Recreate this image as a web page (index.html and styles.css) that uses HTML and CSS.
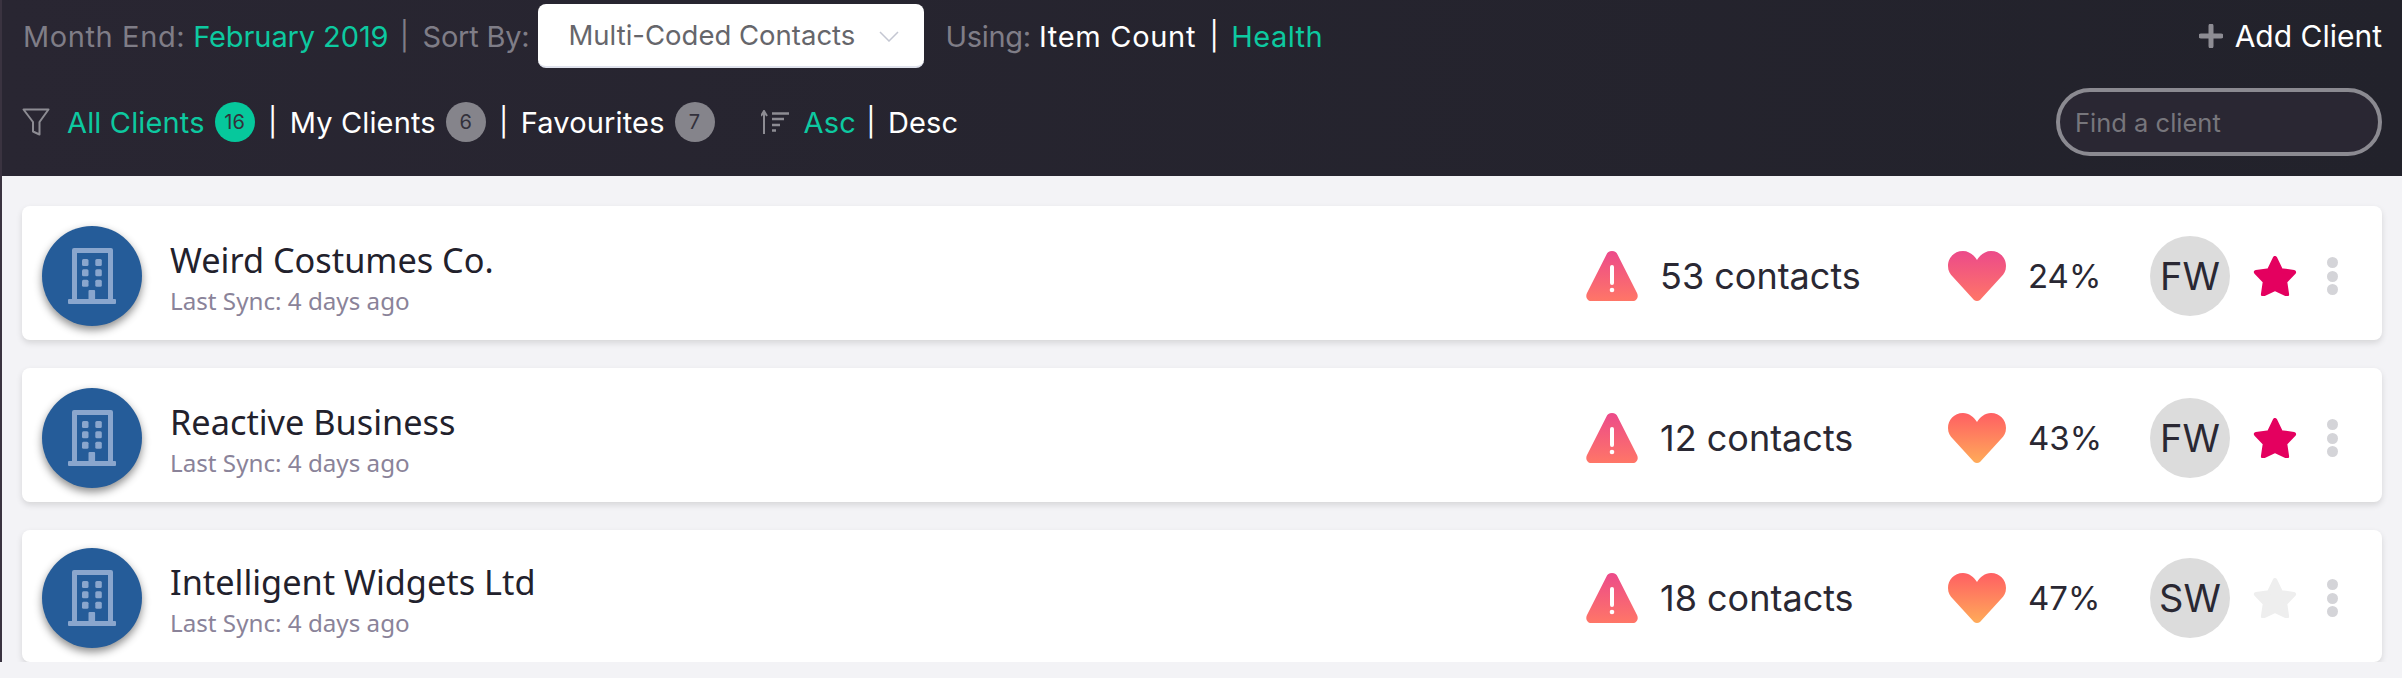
FILE: index.html
```html
<!DOCTYPE html>
<html lang="en">
<head>
    <meta charset="UTF-8">
    <title>Clients</title>
    <link rel="stylesheet" href="styles.css">
</head>
<body>
    <svg class="defs" width="0" height="0">
        <defs>
            <linearGradient id="redPink" x1="0" y1="0" x2="0" y2="1">
                <stop offset="0" stop-color="#ec4a8a"/>
                <stop offset="1" stop-color="#ff7667"/>
            </linearGradient>
            <linearGradient id="redOrange" x1="0" y1="0" x2="0" y2="1">
                <stop offset="0" stop-color="#ff5f63"/>
                <stop offset="1" stop-color="#ffab59"/>
            </linearGradient>
            <symbol id="building" viewBox="0 0 48 56">
                <path d="M4 2a2 2 0 0 1 2-2h37a2 2 0 0 1 2 2v49h-5V5H9v46H4z"/>
                <rect x="14" y="11" width="6.5" height="7" rx="1.5"/>
                <rect x="27.3" y="11" width="6.5" height="7" rx="1.5"/>
                <rect x="14" y="21.3" width="6.5" height="7" rx="1.5"/>
                <rect x="27.3" y="21.3" width="6.5" height="7" rx="1.5"/>
                <rect x="14" y="31.7" width="6.5" height="7" rx="1.5"/>
                <rect x="27.3" y="31.7" width="6.5" height="7" rx="1.5"/>
                <path d="M20.5 43a1 1 0 0 1 1-1h4.6a1 1 0 0 1 1 1v8h-6.6z"/>
                <rect x="0" y="51" width="48" height="5" rx="1"/>
            </symbol>
            <symbol id="warning" viewBox="0 0 52 50">
                <path fill="url(#redPink)" d="M26 0c3 0 4.600 1.500 5.500 3.500L51 42c2 4-.5 8-4 8H5c-3.500 0-6-4-4-8L20.500 3.500C21.400 1.500 23 0 26 0z"/>
                <rect x="24" y="14" width="4" height="20" rx="2" fill="#fff"/>
                <circle cx="26" cy="39" r="2.300" fill="#fff"/>
            </symbol>
            <path id="heartShape" d="M29 9C26 4 21 0 15 0 6 0 0 7 0 15c0 5 2 8 5 11l21 23q3 2 6 0l21-23c3-3 5-6 5-11 0-8-6-15-15-15-6 0-11 4-14 9z"/>
            <symbol id="star" viewBox="3 0 38 36">
                <polygon transform="translate(0 -1.500)" stroke-width="4" stroke-linejoin="round" points="22,3.500 27.300,14.500 39,16 31,24.500 32.700,36 22,31 11.300,36 13,24.500 5,16 16.700,14.500"/>
            </symbol>
        </defs>
    </svg>

    <header class="topbar">
        <div class="bar-row">
            <span class="dim month-label">Month End:</span>
            <span class="green month">February 2019</span>
            <span class="pipe pipe-dim">|</span>
            <span class="dim sort-label">Sort By:</span>
            <div class="sort-select">
                Multi-Coded Contacts
                <svg class="chevron" width="20" height="11" viewBox="0 0 20 11"><path d="M1 1l9 9 9-9" fill="none" stroke="#c4c7d2" stroke-width="1.500"/></svg>
            </div>
            <span class="dim using">Using:</span>
            <span class="white item-count">Item Count</span>
            <span class="pipe">|</span>
            <span class="green health-link">Health</span>
            <a class="add-client">
                <svg width="24" height="24" viewBox="0 0 24 24"><path d="M12 2v20M2 12h20" stroke="#8d8c93" stroke-width="5" stroke-linecap="round"/></svg>
                Add Client
            </a>
        </div>
        <div class="bar-row second">
            <svg class="filter-icon" width="28" height="28" viewBox="0 0 28 28"><path d="M1.500 1.500h25L17.500 14v12.500L11 23.500V14z" fill="none" stroke="#8d8c93" stroke-width="2" stroke-linejoin="round"/></svg>
            <span class="green">All Clients</span>
            <span class="badge active">16</span>
            <span class="pipe">|</span>
            <span class="white">My Clients</span>
            <span class="badge">6</span>
            <span class="pipe">|</span>
            <span class="white">Favourites</span>
            <span class="badge">7</span>
            <svg class="sort-icon" width="28" height="24" viewBox="0 0 28 24"><path d="M3 24V3M0 6l3-5 3 5" fill="none" stroke="#8d8c93" stroke-width="2"/><path d="M11 3.500h17M11 9h12M11 15h8M11 20.500h4" stroke="#8d8c93" stroke-width="2.500"/></svg>
            <span class="green">Asc</span>
            <span class="pipe near">|</span>
            <span class="white">Desc</span>
            <input class="search" type="text" placeholder="Find a client">
        </div>
    </header>

    <main class="client-list">
        <div class="card">
            <div class="logo"><svg width="48" height="56"><use href="#building"/></svg></div>
            <div class="info">
                <div class="name">Weird Costumes Co.</div>
                <div class="sync">Last Sync: 4 days ago</div>
            </div>
            <div class="contacts"><svg width="52" height="50"><use href="#warning"/></svg><span>53 contacts</span></div>
            <div class="health"><svg width="58" height="50" viewBox="0 0 58 50"><use href="#heartShape" fill="url(#redPink)"/></svg><span>24%</span></div>
            <div class="owner">FW</div>
            <svg class="fav on" width="44" height="40"><use href="#star"/></svg>
            <div class="dots"><i></i><i></i><i></i></div>
        </div>
        <div class="card">
            <div class="logo"><svg width="48" height="56"><use href="#building"/></svg></div>
            <div class="info">
                <div class="name">Reactive Business</div>
                <div class="sync">Last Sync: 4 days ago</div>
            </div>
            <div class="contacts"><svg width="52" height="50"><use href="#warning"/></svg><span>12 contacts</span></div>
            <div class="health"><svg width="58" height="50" viewBox="0 0 58 50"><use href="#heartShape" fill="url(#redOrange)"/></svg><span>43%</span></div>
            <div class="owner">FW</div>
            <svg class="fav on" width="44" height="40"><use href="#star"/></svg>
            <div class="dots"><i></i><i></i><i></i></div>
        </div>
        <div class="card short">
            <div class="logo"><svg width="48" height="56"><use href="#building"/></svg></div>
            <div class="info">
                <div class="name">Intelligent Widgets Ltd</div>
                <div class="sync">Last Sync: 4 days ago</div>
            </div>
            <div class="contacts"><svg width="52" height="50"><use href="#warning"/></svg><span>18 contacts</span></div>
            <div class="health"><svg width="58" height="50" viewBox="0 0 58 50"><use href="#heartShape" fill="url(#redOrange)"/></svg><span>47%</span></div>
            <div class="owner">SW</div>
            <svg class="fav" width="44" height="40"><use href="#star"/></svg>
            <div class="dots"><i></i><i></i><i></i></div>
        </div>
    </main>
</body>
</html>
```

FILE: styles.css
```css
* {
    box-sizing: border-box;
}
body {
    margin: 0;
    background-color: #f3f3f6;
    font-family: Inter, "Noto Sans", sans-serif;
    color: #2a2833;
    border-left: 2px solid #3a3340;
    overflow: hidden;
}
.defs {
    position: absolute;
}
.topbar {
    height: 176px;
    margin-left: -2px;
    background: linear-gradient(90deg, #292632, #22222b);
    font-size: 29px;
}
.bar-row {
    display: flex;
    align-items: center;
    height: 72px;
    padding: 0 20px 0 23px;
    gap: 8px;
}
.bar-row.second {
    height: 104px;
    padding-bottom: 4px;
    padding-left: 22px;
    letter-spacing: 0.15px;
}
.dim {
    color: #7f7d87;
}
.green {
    color: #0dc9a0;
}
.white {
    color: #fff;
}
.month-label {
    letter-spacing: 0.6px;
}
.month {
    letter-spacing: -0.1px;
}
.sort-label {
    letter-spacing: -0.2px;
}
.item-count {
    letter-spacing: 0.7px;
}
.health-link {
    letter-spacing: 0.5px;
}
.pipe {
    width: 4px;
    margin: 0 7px 0 8px;
    display: flex;
    justify-content: center;
    color: #fff;
    font-size: 28px;
}
.pipe.near {
    margin-left: 5px;
}
.pipe-dim {
    margin: 0 8px 0 6px;
    color: #7f7d87;
}
.sort-select {
    position: relative;
    width: 386px;
    height: 64px;
    padding: 0 0 0 31px;
    display: flex;
    align-items: center;
    background-color: #fff;
    border-bottom: 2px solid #dfe2ec;
    border-radius: 8px;
    color: #66666b;
    font-size: 27.5px;
}
.chevron {
    position: absolute;
    right: 25px;
    top: 27px;
}
.using {
    margin-left: 14px;
    letter-spacing: -0.3px;
}
.add-client {
    margin-left: auto;
    display: flex;
    align-items: center;
    gap: 12px;
    color: #fff;
    font-size: 30px;
}
.filter-icon {
    margin-right: 9px;
}
.badge {
    width: 40px;
    height: 40px;
    margin-left: 2px;
    display: flex;
    align-items: center;
    justify-content: center;
    border-radius: 50%;
    background-color: #85848b;
    color: #33313b;
    font-size: 20px;
}
.badge.active {
    background-color: #06c89c;
}
.sort-icon {
    margin: 0 7px 0 38px;
}
.search {
    margin-left: auto;
    width: 326px;
    height: 68px;
    padding: 0 15px;
    background-color: #2a2733;
    border: 4px solid #8b8a91;
    border-radius: 34px;
    color: #fff;
    font: 25.5px Inter, "Noto Sans", sans-serif;
    outline: none;
}
.search::placeholder {
    color: #77767c;
}
.client-list {
    display: flex;
    flex-direction: column;
    gap: 28px;
    padding: 30px 20px 0;
}
.card {
    display: flex;
    align-items: center;
    height: 134px;
    padding: 6px 44px 0 20px;
    background-color: #fff;
    border-radius: 8px;
    box-shadow: 0 3px 6px rgba(0, 0, 0, 0.12);
}
.card.short {
    height: 132px;
    padding-top: 4px;
}
.logo {
    width: 100px;
    height: 100px;
    display: flex;
    align-items: center;
    justify-content: center;
    border-radius: 50%;
    background-color: #255c99;
    box-shadow: 0 4px 8px rgba(0, 0, 0, 0.45);
}
.logo svg {
    fill: #8aa6cd;
}
.info {
    flex: 1;
    margin: 0 0 0 28px;
}
.name {
    font-family: "Noto Sans", sans-serif;
    font-size: 34.3px;
    color: #22212c;
}
.sync {
    margin-top: 1px;
    font-family: "Noto Sans", sans-serif;
    font-size: 24.2px;
    color: #8a8399;
}
.contacts,
.health {
    display: flex;
    align-items: center;
    font-size: 36px;
}
.contacts {
    width: 362px;
    gap: 22px;
}
.health {
    width: 202px;
    gap: 22px;
    font-size: 33px;
}
.owner {
    width: 80px;
    height: 80px;
    display: flex;
    align-items: center;
    justify-content: center;
    border-radius: 50%;
    background-color: #dcdcdc;
    font-size: 38px;
}
.fav {
    margin: 0 30px 0 23px;
    fill: #eeeeee;
    stroke: #eeeeee;
}
.fav.on {
    fill: #e4005f;
    stroke: #e4005f;
}
.dots {
    width: 11px;
    display: flex;
    flex-direction: column;
    gap: 2.5px;
}
.dots i {
    height: 11px;
    border-radius: 50%;
    background-color: #d4d4d8;
}
```
